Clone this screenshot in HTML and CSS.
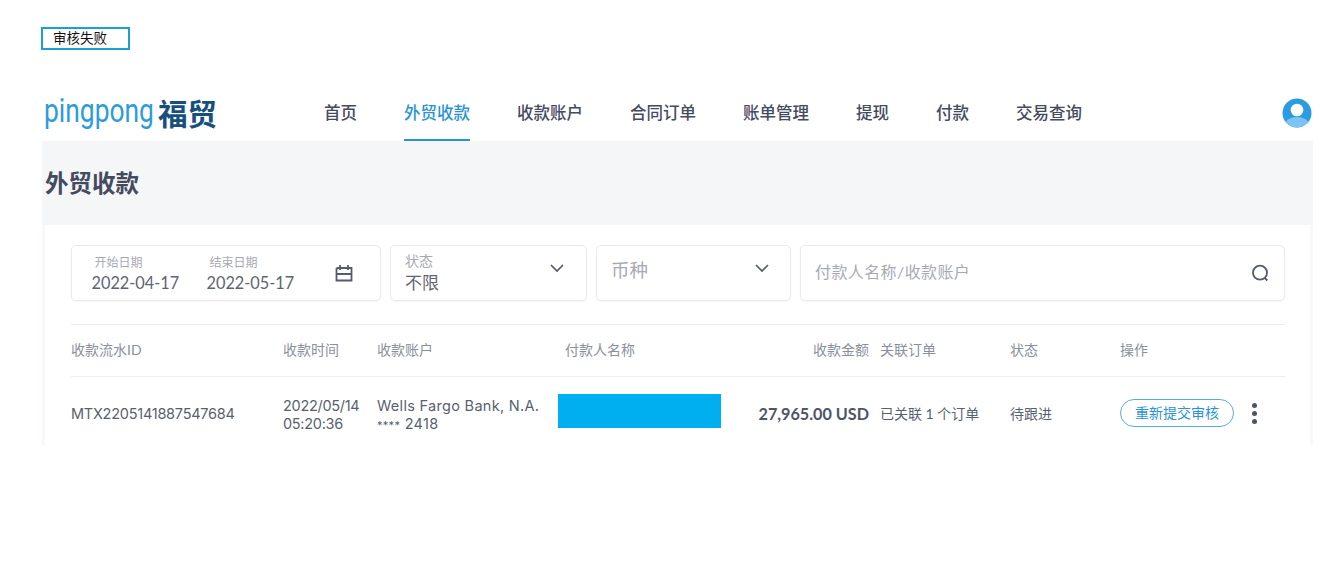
FILE: index.html
```html
<!DOCTYPE html>
<html lang="en">
<head>
  <meta charset="UTF-8">
  <title>外贸收款</title>
  <link rel="stylesheet" href="styles.css">
</head>
<body>

<div class="status-tag">审核失败</div>

<div class="app">
  <header class="topbar">
    <div class="logo">
      <span class="logo-en">pingpong</span>
      <span class="logo-cn">福贸</span>
    </div>
    <nav class="nav">
      <a href="#">首页</a>
      <a href="#" class="active">外贸收款</a>
      <a href="#">收款账户</a>
      <a href="#">合同订单</a>
      <a href="#">账单管理</a>
      <a href="#">提现</a>
      <a href="#">付款</a>
      <a href="#">交易查询</a>
    </nav>
    <svg class="avatar" width="30" height="30" viewBox="0 0 30 30">
      <defs><clipPath id="avatarClip"><circle cx="15" cy="15" r="14.5"/></clipPath></defs>
      <circle cx="15" cy="15" r="14.5" fill="#2b9be2"/>
      <g clip-path="url(#avatarClip)">
        <ellipse cx="15" cy="27" rx="12" ry="8" fill="#7cc4f4"/>
      </g>
      <circle cx="15" cy="12" r="6.3" fill="#fff"/>
    </svg>
  </header>

  <div class="page-head">
    <h1>外贸收款</h1>
  </div>

  <section class="card">
    <div class="filters">
      <div class="box date-box">
        <div class="date-col">
          <span class="mini-label">开始日期</span>
          <span class="date-val">2022-04-17</span>
        </div>
        <div class="date-col">
          <span class="mini-label">结束日期</span>
          <span class="date-val">2022-05-17</span>
        </div>
        <svg class="cal" width="18" height="18" viewBox="0 0 18 18" fill="none" stroke="#555b6e" stroke-width="1.8">
          <path d="M1.5 4h3.5M13 4h3.5v12.5h-15v-12.5"/>
          <path d="M1.5 10h15M5 1v5M13 1v5M5 4h8"/>
        </svg>
      </div>
      <div class="box select-box status-box">
        <div class="select-text">
          <span class="mini-label">状态</span>
          <span class="select-val">不限</span>
        </div>
        <svg class="chevron" width="16" height="10" viewBox="0 0 16 10" fill="none" stroke="#555b6e" stroke-width="1.7"><path d="M2 2l6 6 6-6"/></svg>
      </div>
      <div class="box select-box currency-box">
        <span class="placeholder-big">币种</span>
        <svg class="chevron" width="16" height="10" viewBox="0 0 16 10" fill="none" stroke="#555b6e" stroke-width="1.7"><path d="M2 2l6 6 6-6"/></svg>
      </div>
      <div class="box search-box">
        <span class="placeholder">付款人名称/收款账户</span>
        <svg width="20" height="20" viewBox="0 0 20 20" fill="none" stroke="#555b6e" stroke-width="1.8"><circle cx="10" cy="9.7" r="7"/><path d="M14.8 15l2.5 2.5"/></svg>
      </div>
    </div>

    <div class="table">
      <div class="row head">
        <div>收款流水ID</div>
        <div>收款时间</div>
        <div>收款账户</div>
        <div>付款人名称</div>
        <div class="amount">收款金额</div>
        <div>关联订单</div>
        <div>状态</div>
        <div>操作</div>
      </div>
      <div class="row body">
        <div class="mono-id">MTX2205141887547684</div>
        <div class="two-line date-cell">2022/05/14<br>05:20:36</div>
        <div class="two-line bank-cell">Wells Fargo Bank, N.A.<br><span class="stars">****</span> 2418</div>
        <div><div class="redact"></div></div>
        <div class="amount amount-val">27,965.00 USD</div>
        <div>已关联 1 个订单</div>
        <div>待跟进</div>
        <div class="ops">
          <a href="#" class="pill">重新提交审核</a>
          <span class="more"><i></i><i></i><i></i></span>
        </div>
      </div>
    </div>
  </section>
</div>

</body>
</html>
```

FILE: styles.css
```css
body {
  margin: 0;
  background: #fff;
  font-family: 'Lato', 'Noto Sans CJK SC', sans-serif;
  color: #4a4f63;
  height: 582px;
  overflow: hidden;
}

.status-tag {
  width: 89px;
  height: 23px;
  box-sizing: border-box;
  margin: 27px 0 0 41px;
  padding-left: 10px;
  border: 2px solid #1a9fd8;
  color: #111;
  font-family: 'Noto Sans CJK SC', sans-serif;
  font-size: 13.5px;
  line-height: 17px;
}

.app {
  width: 1271px;
  margin: 40px 0 0 42px;
}

/* top bar */
.topbar {
  display: flex;
  align-items: center;
  height: 51px;
}

.logo {
  display: flex;
  align-items: center;
  width: 282px;
  padding-left: 2px;
  box-sizing: border-box;
}

.logo-en {
  display: inline-block;
  width: 114px;
  font-family: 'Roboto', sans-serif;
  font-weight: 400;
  font-size: 33px;
  line-height: 36px;
  color: #2d9cdb;
  white-space: nowrap;
  transform: scaleX(0.8);
  transform-origin: left center;
  margin-top: -9px;
}

.logo-cn {
  font-family: 'Noto Sans CJK SC', sans-serif;
  font-weight: 700;
  font-size: 29.5px;
  line-height: 36px;
  color: #17507f;
  margin-top: -8px;
}

.nav {
  display: flex;
  gap: 47px;
  height: 100%;
}

.nav a {
  display: flex;
  align-items: center;
  box-sizing: border-box;
  height: 51px;
  padding-bottom: 5px;
  font-size: 16.5px;
  font-weight: 500;
  color: #454b5f;
  text-decoration: none;
  border-bottom: 2px solid transparent;
}

.nav a.active {
  color: #2a93d5;
  border-bottom-color: #2a93d5;
}

.avatar {
  margin: -6px 1px 0 auto;
}

/* title band */
.page-head {
  height: 84px;
  box-sizing: border-box;
  padding: 25px 0 0 3px;
  background: #f4f6f8;
}

.page-head h1 {
  margin: 0;
  font-size: 23.5px;
  line-height: 34px;
  font-weight: 700;
  color: #454b5f;
}

/* card */
.card {
  height: 220px;
  overflow: hidden;
  box-sizing: border-box;
  padding: 20px 25px 0 26px;
  border-left: 3px solid #f7f8f9;
  border-right: 3px solid #f7f8f9;
  background: #fff;
}

.filters {
  display: flex;
  height: 56px;
}

.box {
  display: flex;
  align-items: center;
  box-sizing: border-box;
  height: 56px;
  border: 1px solid #e8eaed;
  border-radius: 5px;
  box-shadow: 0 1px 2px rgba(0,0,0,0.04);
}

.date-box {
  width: 310px;
  padding: 0 27px 0 19.5px;
  margin-right: 9px;
}

.date-col {
  display: flex;
  flex-direction: column;
  width: 115px;
}

.date-col .mini-label {
  padding-left: 3px;
}

.mini-label {
  font-size: 12px;
  line-height: 16px;
  color: #a7aab4;
}

.date-val {
  font-family: 'Lato', sans-serif;
  font-size: 16.3px;
  line-height: 20px;
  margin-top: 2px;
  margin-bottom: -2px;
  color: #5f6475;
}

.cal {
  margin-left: auto;
}

.select-box {
  justify-content: space-between;
}

.chevron {
  margin-top: -10px;
}

.status-box {
  width: 197px;
  padding: 0 21px 0 14px;
  margin-right: 9px;
}

.currency-box {
  width: 195px;
  padding: 0 20px 0 14px;
  margin-right: 9px;
}

.select-text {
  display: flex;
  flex-direction: column;
}

.select-text .mini-label {
  font-size: 14px;
  line-height: 17px;
  margin-top: -4px;
}

.select-val {
  font-size: 17px;
  line-height: 22px;
  margin-top: 3px;
  margin-bottom: -3px;
  color: #5f6475;
}

.placeholder-big {
  font-size: 18.5px;
  line-height: 26px;
  margin-top: -7px;
  color: #a7aab4;
}

.search-box {
  flex: 1;
  justify-content: space-between;
  padding: 0 14px;
}

.placeholder {
  font-size: 16px;
  letter-spacing: 0.4px;
  color: #a7aab4;
  margin-top: -4px;
}

/* table */
.table {
  margin-top: 23px;
  border-top: 1px solid #eceef1;
}

.row {
  display: grid;
  grid-template-columns: 212px 94px 188px 180px 135px 130px 110px 1fr;
  align-items: center;
  box-sizing: border-box;
  font-size: 14px;
}

.row.head {
  height: 52px;
  padding-bottom: 4px;
  color: #8b8f9c;
  border-bottom: 1px solid #eceef1;
}

.row.body {
  height: 76px;
  padding-bottom: 4px;
  color: #5a5f70;
}

.amount {
  justify-content: flex-end;
  text-align: right;
  padding-right: 11px;
}

.amount-val {
  font-size: 16.2px;
  font-weight: 700;
  color: #4f5468;
  white-space: nowrap;
}

.mono-id, .two-line {
  font-family: 'Inter', sans-serif;
  white-space: nowrap;
}

.two-line {
  line-height: 18px;
  padding-top: 4px;
}

.mono-id {
  font-size: 14.5px;
  letter-spacing: -0.25px;
}

.date-cell {
  font-size: 14.5px;
  letter-spacing: -0.3px;
}

.bank-cell {
  font-size: 14.5px;
  letter-spacing: 0.3px;
}

.stars {
  font-size: 11px;
}

.redact {
  width: 163px;
  height: 34px;
  margin: -5px 0 0 -7px;
  background: #00aff0;
}

.ops {
  display: flex;
  align-items: center;
}

.pill {
  box-sizing: border-box;
  width: 114px;
  height: 28px;
  border: 1.5px solid #58ace4;
  border-radius: 14px;
  text-align: center;
  line-height: 25px;
  color: #2a93d5;
  text-decoration: none;
  font-size: 14px;
}

.more {
  display: flex;
  flex-direction: column;
  gap: 3px;
  margin-left: 18px;
}

.more i {
  width: 5px;
  height: 5px;
  border-radius: 50%;
  background: #4f5468;
}
```
